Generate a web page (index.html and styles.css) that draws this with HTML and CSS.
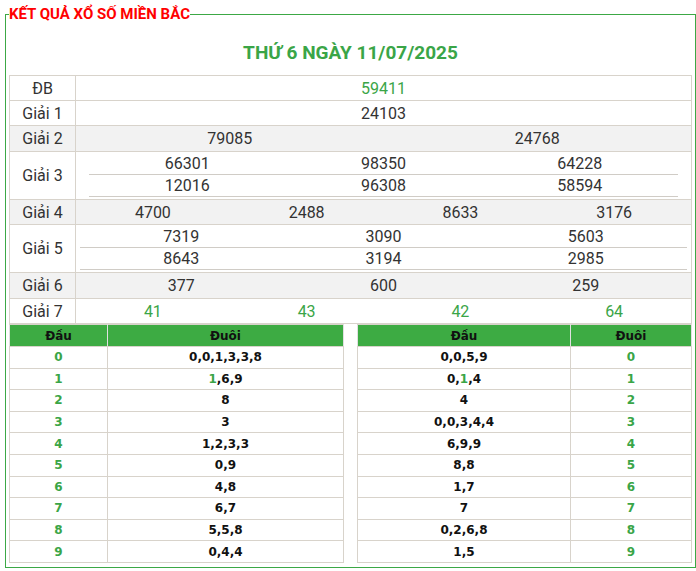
FILE: index.html
```html
<!DOCTYPE html>
<html lang="vi">
<head>
<meta charset="utf-8">
<title>Kết quả xổ số miền Bắc</title>
<link rel="stylesheet" href="styles.css">
</head>
<body>
<fieldset class="box">
  <legend class="box-title">KẾT QUẢ XỔ SỐ MIỀN BẮC</legend>
  <h2 class="date">THỨ 6 NGÀY 11/07/2025</h2>
  <table class="kq">
    <tr class="h25"><td class="lbl">ĐB</td><td><div class="c1"><span class="win">59411</span></div></td></tr>
    <tr class="h25"><td class="lbl">Giải 1</td><td><div class="c1"><span>24103</span></div></td></tr>
    <tr class="h26 alt"><td class="lbl">Giải 2</td><td><div class="c2"><span>79085</span><span>24768</span></div></td></tr>
    <tr class="h48"><td class="lbl">Giải 3</td><td class="pb">
      <div class="c3 sub wide"><span>66301</span><span>98350</span><span>64228</span></div>
      <div class="c3 sub wide s2"><span>12016</span><span>96308</span><span>58594</span></div>
    </td></tr>
    <tr class="h25 alt"><td class="lbl">Giải 4</td><td><div class="c4"><span>4700</span><span>2488</span><span>8633</span><span>3176</span></div></td></tr>
    <tr class="h48"><td class="lbl">Giải 5</td><td class="pb">
      <div class="c3 sub narrow"><span>7319</span><span>3090</span><span>5603</span></div>
      <div class="c3 sub narrow s2"><span>8643</span><span>3194</span><span>2985</span></div>
    </td></tr>
    <tr class="h26 alt"><td class="lbl">Giải 6</td><td><div class="c3 narrow"><span>377</span><span>600</span><span>259</span></div></td></tr>
    <tr class="h25"><td class="lbl">Giải 7</td><td><div class="c4 win"><span>41</span><span>43</span><span>42</span><span>64</span></div></td></tr>
  </table>
  <div class="loto">
    <table class="lt">
      <colgroup><col class="l-dau"><col></colgroup>
      <thead><tr><th>Đầu</th><th>Đuôi</th></tr></thead>
      <tbody>
        <tr><td class="hl">0</td><td>0,0,1,3,3,8</td></tr>
        <tr><td class="hl">1</td><td><span class="hl">1</span>,6,9</td></tr>
        <tr><td class="hl">2</td><td>8</td></tr>
        <tr><td class="hl">3</td><td>3</td></tr>
        <tr><td class="hl">4</td><td>1,2,3,3</td></tr>
        <tr><td class="hl">5</td><td>0,9</td></tr>
        <tr><td class="hl">6</td><td>4,8</td></tr>
        <tr><td class="hl">7</td><td>6,7</td></tr>
        <tr><td class="hl">8</td><td>5,5,8</td></tr>
        <tr><td class="hl">9</td><td>0,4,4</td></tr>
      </tbody>
    </table>
    <table class="lt">
      <colgroup><col class="r-dau"><col></colgroup>
      <thead><tr><th>Đầu</th><th>Đuôi</th></tr></thead>
      <tbody>
        <tr><td>0,0,5,9</td><td class="hl">0</td></tr>
        <tr><td>0,<span class="hl">1</span>,4</td><td class="hl">1</td></tr>
        <tr><td>4</td><td class="hl">2</td></tr>
        <tr><td>0,0,3,4,4</td><td class="hl">3</td></tr>
        <tr><td>6,9,9</td><td class="hl">4</td></tr>
        <tr><td>8,8</td><td class="hl">5</td></tr>
        <tr><td>1,7</td><td class="hl">6</td></tr>
        <tr><td>7</td><td class="hl">7</td></tr>
        <tr><td>0,2,6,8</td><td class="hl">8</td></tr>
        <tr><td>1,5</td><td class="hl">9</td></tr>
      </tbody>
    </table>
  </div>
</fieldset>
</body>
</html>
```

FILE: styles.css
```css
* { box-sizing: border-box; }

body {
  margin: 0;
  background: #ffffff;
  font-family: Roboto, "Liberation Sans", Arial, sans-serif;
  color: #333333;
}

.box {
  margin: 5px 0 0 5px;
  padding: 0 3px 4px 3px;
  border: 1px solid #3ca845;
  min-width: 0;
}

.box-title {
  padding: 0;
  color: #ff0000;
  font-size: 15px;
  line-height: 18px;
  font-weight: 700;
}

.date {
  margin: 18px 0 10px;
  text-align: center;
  color: #3aa547;
  font-size: 19px;
  line-height: 24px;
  font-weight: 700;
}

.kq {
  width: 100%;
  border-collapse: collapse;
  font-size: 16px;
  color: #333333;
}

.kq td {
  border: 1px solid #d8d3cb;
  padding: 0;
  text-align: center;
  vertical-align: middle;
}

.kq .lbl { width: 66px; }

.kq .pb { padding-bottom: 2px; vertical-align: top; }

.kq tr.alt td { background: #f2f2f2; }

.h25 { height: 25px; }
.h26 { height: 26px; }
.h48 { height: 48px; }

.c1, .c2, .c3, .c4 { display: grid; }
.c2 { grid-template-columns: 1fr 1fr; }
.c3 { grid-template-columns: 1fr 1fr 1fr; }
.c4 { grid-template-columns: 1fr 1fr 1fr 1fr; }

.sub {
  height: 23px;
  line-height: 23px;
  border-bottom: 1px solid #d0ccc6;
}
.sub.s2 { height: 22px; line-height: 21px; }

.wide { margin: 0 13px; }
.narrow { margin: 0 4px; }

.win { color: #3aa547; }

.loto {
  display: flex;
  gap: 13px;
}

.lt {
  flex: 1;
  width: 335px;
  border-collapse: collapse;
  table-layout: fixed;
  font-family: "DejaVu Sans", Verdana, sans-serif;
  font-size: 12px;
  font-weight: 700;
  color: #111111;
}

.l-dau { width: 98px; }
.r-dau { width: 213px; }

.lt th, .lt td {
  border: 1px solid #d8d3cb;
  padding: 0;
  text-align: center;
}

.lt th {
  height: 22px;
  background: #3dab43;
  color: #111111;
  border-color: #d8d3cb #e0e0e0;
}

.lt tbody tr { height: 21.6px; }

.lt .hl { color: #3aa547; }
```
